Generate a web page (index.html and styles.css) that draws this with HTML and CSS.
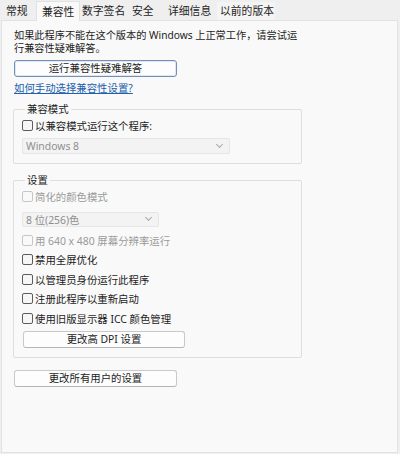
FILE: index.html
```html
<!DOCTYPE html>
<html lang="zh-CN">
<head>
<meta charset="utf-8">
<title>兼容性</title>
<link rel="stylesheet" href="styles.css">
</head>
<body>
<div class="window">
  <div class="tabs">
    <div class="tab t1">常规</div>
    <div class="tab t2 active">兼容性</div>
    <div class="tab t3">数字签名</div>
    <div class="tab t4">安全</div>
    <div class="tab t5">详细信息</div>
    <div class="tab t6 hover">以前的版本</div>
  </div>
  <div class="panel">
    <p class="intro">如果此程序不能在这个版本的 Windows 上正常工作，请尝试运行兼容性疑难解答。</p>
    <div class="btn btn-default btn-wide">运行兼容性疑难解答</div>
    <a class="link" href="#">如何手动选择兼容性设置?</a>

    <fieldset class="group group-mode">
      <legend>兼容模式</legend>
      <label class="row"><span class="cb"></span><span>以兼容模式运行这个程序:</span></label>
      <div class="select select-os"><span>Windows 8</span><span class="chev"></span></div>
    </fieldset>

    <fieldset class="group group-settings">
      <legend>设置</legend>
      <label class="row disabled"><span class="cb"></span><span>简化的颜色模式</span></label>
      <div class="select select-color"><span>8 位(256)色</span><span class="chev"></span></div>
      <label class="row disabled res"><span class="cb"></span><span>用 640 x 480 屏幕分辨率运行</span></label>
      <label class="row"><span class="cb"></span><span>禁用全屏优化</span></label>
      <label class="row"><span class="cb"></span><span>以管理员身份运行此程序</span></label>
      <label class="row"><span class="cb"></span><span>注册此程序以重新启动</span></label>
      <label class="row"><span class="cb"></span><span>使用旧版显示器 ICC 颜色管理</span></label>
      <div class="btn btn-dpi">更改高 DPI 设置</div>
    </fieldset>

    <div class="btn btn-wide btn-all">更改所有用户的设置</div>
  </div>
</div>
</body>
</html>
```
FILE: styles.css
```css
* { box-sizing: border-box; }
html, body {
  margin: 0;
  padding: 0;
  width: 400px;
  height: 454px;
  overflow: hidden;
  background: #efefef;
}
body {
  font-family: "Noto Sans", "Noto Sans CJK SC", sans-serif;
  font-size: 10.4px;
  color: #1c1c1c;
}
.window {
  width: 400px;
  height: 454px;
  display: flex;
  flex-direction: column;
}
.tabs {
  height: 20px;
  display: flex;
  align-items: flex-end;
  padding-left: 0;
  font-size: 10.8px;
  position: relative;
  z-index: 1;
}
.tab {
  height: 18px;
  line-height: 17px;
  white-space: nowrap;
  color: #1e1e1e;
}
.t1 { padding: 0 6px 0 6px; width: 36px; }
.t2 { padding: 0 0 0 5px; width: 44px; }
.t3 { padding: 0 0 0 2px; width: 51px; }
.t4 { padding: 0 0 0 1px; width: 37px; }
.t5 { padding: 0 0 0 0; width: 49px; }
.t6 { padding: 0 0 0 3px; width: 58px; }
.tab.active {
  height: 20px;
  line-height: 19px;
  background: #f9f9f9;
  border: 1px solid #e2e2e2;
  border-bottom: none;
  margin-bottom: -1px;
}
.tab.hover {
  background: #f4f4f4;
  height: 18px;
}
.panel {
  flex: 1;
  margin: 0 2px 1px 1px;
  background: #f9f9f9;
  border: 1px solid #e2e2e2;
  padding: 8px 0 0 12px;
}
.intro {
  margin: 0;
  width: 292px;
  font-size: 10.2px;
  line-height: 13px;
}
.btn {
  height: 17px;
  line-height: 15px;
  text-align: center;
  background: #fdfdfd;
  border: 1px solid #c9c9c9;
  border-bottom-color: #b5b5b5;
  border-radius: 3px;
  color: #1c1c1c;
}
.btn-wide { width: 163px; }
.btn-default {
  margin-top: 5px;
  border: 1px solid #7092b8;
  box-shadow: inset 0 0 0 1px #dfe8f2;
}
.link {
  display: block;
  width: max-content;
  margin-top: 5px;
  line-height: 13px;
  color: #2160ad;
  text-decoration: underline;
  text-underline-offset: 1px;
}
.group {
  margin: 8px 0 0 -1px;
  width: 289px;
  border: 1px solid #dedede;
  border-radius: 2px;
  padding: 0 8px 9px 8px;
}
.group legend {
  padding: 0 2px;
  margin-left: 3px;
  line-height: 13px;
  color: #1c1c1c;
}
.group-settings { margin-top: 10px; padding-bottom: 9px; }
.row {
  display: flex;
  align-items: center;
  height: 19.5px;
  gap: 2px;
}
.group-mode .row { height: 19px; }
.cb {
  width: 11px;
  height: 11px;
  border: 1px solid #5c5c5c;
  border-radius: 2px;
  background: #f6f6f6;
  flex: none;
}
.row.disabled { color: #9a9a9a; }
.row.disabled .cb { border-color: #c6c6c6; background: #f9f9f9; }
.select {
  display: flex;
  align-items: center;
  justify-content: space-between;
  background: #f3f3f3;
  border: 1px solid #e6e6e6;
  border-radius: 2px;
  color: #8e8e8e;
  padding: 0 7px 0 3px;
}
.select-os { width: 208px; height: 16px; margin-top: 3px; }
.select-color { width: 137px; height: 15px; margin-top: 5px; }
.chev {
  width: 5px;
  height: 5px;
  border-right: 1px solid #a8a8a8;
  border-bottom: 1px solid #a8a8a8;
  transform: rotate(45deg);
  margin-top: -3px;
}
.row.res { margin-top: 4px; }
.btn-dpi {
  width: 162px;
  margin: 3px 0 0 1px;
}
.btn-all { margin-top: 12px; }
```
